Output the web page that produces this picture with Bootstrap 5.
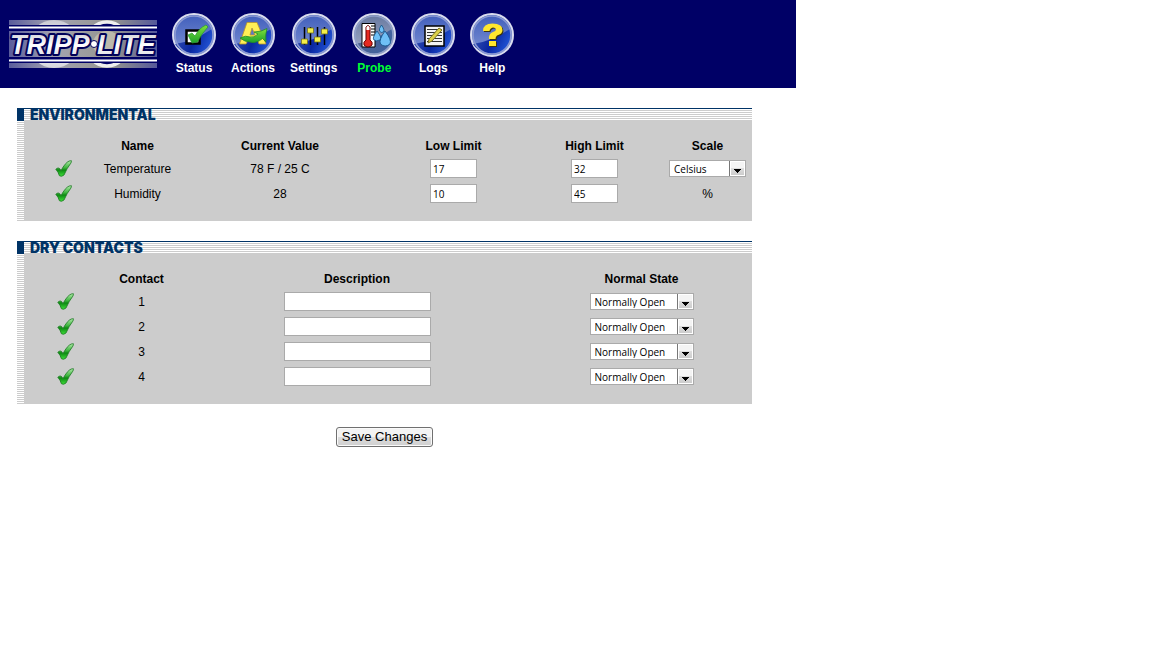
<!DOCTYPE html>
<html lang="en">
<head>
<meta charset="utf-8">
<meta name="viewport" content="width=device-width, initial-scale=1">
<title>Probe</title>
<link href="https://cdn.jsdelivr.net/npm/bootstrap@5.3.0/dist/css/bootstrap.min.css" rel="stylesheet">
<style>
  body { font-family: "Liberation Sans", Arial, sans-serif; font-size: 12px; line-height: 16px; color: #000; background: #fff; }
  .page-frame { max-width: 796px; }
  .top-bar { background: #006; height: 88px; padding: 0 9px; }
  .main-nav { padding: 13px 0 0 15px; gap: 15px; }
  .main-nav a { min-width: 44px; color: #fff; font-weight: bold; text-decoration: none; text-align: center; }
  .main-nav a.active { color: #0f3; }
  .main-nav svg { display: block; margin: 0 auto 3px; }
  .main-area { padding: 20px 44px 0 17px; }
  .panel { border-top: 1px solid #036; margin-bottom: 20px; padding-left: 7px;
    background: repeating-linear-gradient(#fff 0 1px, #ccc 1px 2px); }
  .panel-title { margin: 0 0 0 -7px; border-left: 7px solid #036; padding-left: 6px; height: 12px;
    font: 900 14px/12px Inter, "Liberation Sans", sans-serif; color: #036; }
  .panel-body { background: #ccc; padding: 14px 6px 15px 0; }
  .panel-body table { width: 100%; table-layout: fixed; text-align: center; }
  .panel-body th, .panel-body td { padding: 0; height: 25px; vertical-align: middle; }
  .panel-body th { height: 21px; }
  .panel-body svg { display: block; margin: 0 auto; }
  .c-tick { width: 78px; } .c-tick-wide { width: 82px; } .c-name { width: 71px; } .c-low { width: 133px; }
  .c-high { width: 149px; } .c-scale { width: 77px; } .c-state { width: 209px; }
  .field, .picker { font: 10px/12px "Open Sans", "Liberation Sans", sans-serif; color: #000; background-color: #fff;
    border: 1px solid #aaa; border-radius: 0; display: block; margin: 0 auto; }
  .field { width: 47px; height: 19px; padding: 0 2px; }
  .field-wide { width: 147px; }
  .picker { appearance: none; width: 104px; height: 17px; padding: 0 18px 0 4px;
    background: #fff url("data:image/svg+xml,%3Csvg xmlns='http://www.w3.org/2000/svg' width='17' height='17'%3E%3Cdefs%3E%3ClinearGradient id='g' x2='0' y2='1'%3E%3Cstop offset='.45' stop-color='%23f4f4f4'/%3E%3Cstop offset='.5' stop-color='%23ddd'/%3E%3Cstop offset='1' stop-color='%23ccc'/%3E%3C/linearGradient%3E%3C/defs%3E%3Crect x='.5' y='.5' width='16' height='16' fill='%23fff' stroke='%23777'/%3E%3Crect x='2' y='2' width='13' height='13' fill='url(%23g)'/%3E%3Cpath d='M5 9h7v1h-1v1h-1v1H9v1H8v-1H7v-1H6v-1H5z'/%3E%3C/svg%3E") right center no-repeat border-box; }
  .picker-small { width: 77px; }
  .save-btn { font-size: 13px; line-height: 16px; padding: 1px 5px; color: #000; border: 1px solid #707070; border-radius: 3px;
    background: linear-gradient(#f3f3f3 0 48%, #ddd 52%, #cfcfcf); box-shadow: inset 0 0 0 1px #fafafa; margin-top: 3px; }
</style>
<script src="https://cdn.jsdelivr.net/npm/bootstrap@5.3.0/dist/js/bootstrap.bundle.min.js"></script>
</head>
<body>
<svg width="0" height="0" class="position-absolute" aria-hidden="true">
  <defs>
    <linearGradient id="gloss" x2="0" y2="1"><stop offset="0" stop-color="#3f5dbb"/><stop offset="1" stop-color="#8296d6"/></linearGradient>
    <linearGradient id="deep" x2="1" y2=".3"><stop offset="0" stop-color="#3a55b4"/><stop offset=".6" stop-color="#0a27a0"/><stop offset="1" stop-color="#1f4fd0"/></linearGradient>
    <linearGradient id="glossGrey" x2="0" y2="1"><stop offset="0" stop-color="#66779f"/><stop offset="1" stop-color="#a9b3cc"/></linearGradient>
    <linearGradient id="deepGrey" x2="1" y2=".3"><stop offset="0" stop-color="#4e628f"/><stop offset="1" stop-color="#41639f"/></linearGradient>
    <linearGradient id="leaf" x2="0" y2="1"><stop offset="0" stop-color="#aee8a8"/><stop offset=".45" stop-color="#3db53d"/><stop offset=".6" stop-color="#0d8a12"/><stop offset="1" stop-color="#3fe03a"/></linearGradient>
    <linearGradient id="lime" x2="0" y2="1"><stop offset="0" stop-color="#7fe03a"/><stop offset="1" stop-color="#1fa32a"/></linearGradient>
    <linearGradient id="silver" x2="0" y2="1"><stop offset="0" stop-color="#c8c8d0"/><stop offset=".5" stop-color="#fff"/><stop offset="1" stop-color="#d5d5dc"/></linearGradient>
    <linearGradient id="plate"><stop offset="0" stop-color="#5a5c9c"/><stop offset=".3" stop-color="#a3a3b0"/><stop offset=".7" stop-color="#94948f"/><stop offset="1" stop-color="#55589a"/></linearGradient>
    <symbol id="disc" viewBox="0 0 44 44">
      <circle cx="22" cy="22" r="21" fill="url(#gloss)" stroke="#d9dcee" stroke-width="2"/>
      <path d="M3 31Q20 29 40 16Q43 28 35 36Q27 43 17 40Q7 38 3 31Z" fill="url(#deep)"/>
      <circle cx="22" cy="22" r="19" fill="none" stroke="#8c9ad2" stroke-width="1.5"/>
    </symbol>
    <symbol id="discGrey" viewBox="0 0 44 44">
      <circle cx="22" cy="22" r="21" fill="url(#glossGrey)" stroke="#d9dcee" stroke-width="2"/>
      <path d="M3 31Q20 29 40 16Q43 28 35 36Q27 43 17 40Q7 38 3 31Z" fill="url(#deepGrey)"/>
      <circle cx="22" cy="22" r="19" fill="none" stroke="#8f9fc8" stroke-width="1.5"/>
    </symbol>
    <symbol id="tick" viewBox="0 0 17 17">
      <path d="M.8 9.3Q4 6.2 6 10.6Q10.3 2.6 14.2 1L16.4.7Q16.8 1.4 15.8 3.2Q12 8 9 15Q6.500 17.2 4.4 15.7Q3.4 12 .8 9.3Z" fill="url(#leaf)" stroke="#1c7a22" stroke-width=".8"/>
    </symbol>
  </defs>
</svg>

<div class="page-frame">
  <header class="top-bar d-flex">
    <svg class="mt-3 flex-shrink-0" width="148" height="56" viewBox="0 -4 148 56" role="img" aria-label="Tripp-Lite">
      <rect width="148" height="48" fill="url(#plate)"/>
      <clipPath id="logoBox"><rect width="148" height="48"/></clipPath>
      <g clip-path="url(#logoBox)">
        <ellipse cx="45" cy="24" rx="25" ry="24" fill="url(#silver)"/>
        <ellipse cx="98" cy="24" rx="21" ry="22" fill="#006" stroke="#eee" stroke-width="3.500"/>
      </g>
      <rect y="5" width="148" height="38" fill="#006"/>
      <path d="M0 7.500H148M0 40.500H148" stroke="#fff" stroke-width="2"/>
      <rect y="11" width="148" height="26" fill="url(#plate)"/>
      <ellipse cx="98" cy="24" rx="14" ry="13" fill="#bbb9ac"/>
      <g font-family="'Liberation Sans',Arial,sans-serif" font-size="27" font-weight="bold" font-style="italic" fill="url(#silver)" stroke="#000058" stroke-width="4" stroke-linejoin="round" paint-order="stroke">
        <text x="1" y="34">TRIPP</text>
        <text x="88" y="34">LITE</text>
      </g>
      <circle cx="85" cy="24" r="3.500" fill="#fff" stroke="#000058"/>
    </svg>
    <nav class="main-nav d-flex align-items-start">
      <a href="#"><svg width="44" height="44"><use href="#disc"/><path d="M14.500 17.500H27.500V30.500H14.500Z" fill="#fff" stroke="#000" stroke-width="2.500"/><path d="M16 22L20 20L23 23Q27 15 34 12L36 14Q30 20 25.500 29L20 30Z" fill="url(#lime)" stroke="#249b2c" stroke-width=".7"/></svg>Status</a>
      <a href="#"><svg width="44" height="44"><use href="#disc"/><path d="M16 9.500H26L35 31H28L26.500 27H17L15 31H8.500ZM21 15L19 22H24Z" fill="#ffef55" fill-rule="evenodd" stroke="#b9962a" stroke-width=".8"/><path d="M9 25Q15 22 19 24Q23 25 27 21L23 19Q30 19 36 15.500Q34 22 35 29L31.500 25.500Q25 31 19 29Q14 29 9 25Z" fill="url(#lime)" stroke="#218a27" stroke-width=".8"/></svg>Actions</a>
      <a href="#"><svg width="44" height="44"><use href="#disc"/><path d="M12.500 14V32M18.500 14V32M25.500 14V32M32.500 14V32" stroke="#000" stroke-width="1.500"/><g fill="#f4ef48" stroke="#77741c" stroke-width=".8"><path d="M9.500 26h6v5h-6zM15.500 15h6v5h-6zM22.500 24h6v5h-6zM29.500 16h6v5h-6z"/></g></svg>Settings</a>
      <a href="#" class="active" aria-current="page"><svg width="44" height="44"><use href="#discGrey"/><path d="M10 10.500H23V34H10Z" fill="#fff" stroke="#000"/><path d="M19 13H23M19 16H23M19 19H23M19 22H23" stroke="#000"/><path d="M14 27V14Q16 11 18 14V27Q21 29 20 32Q16 36 12 32Q11 29 14 27Z" fill="#e52a20" stroke="#600"/><path d="M14.500 14Q16 12 17.500 14V17H14.500Z" fill="#fff"/><g fill="#6fc0f6" stroke="#104f84" stroke-width=".8"><path d="M29.500 12Q33 17 31.500 19Q29 20.500 27.500 18Q26.500 16 29.500 12Z"/><path d="M25 18Q30.500 25 28 27Q24 29 21.500 26.500Q20.500 24 25 18Z"/><path d="M33 18Q40 27 38 31Q33 35 28.500 31Q26.500 27 33 18Z"/></g></svg>Probe</a>
      <a href="#"><svg width="44" height="44"><use href="#disc"/><path d="M14 13H33V33H14Z" fill="#f4f4f4" stroke="#000" stroke-width="1.500"/><path d="M16 16.500H31M16 19.500H31M16 22.500H31M16 25.500H31M16 28.500H31" stroke="#333"/><path d="M17 30L18 26L28 15L31 17L21 28Z" fill="#dcd04a" stroke="#776f20"/></svg>Logs</a>
      <a href="#"><svg width="44" height="44"><use href="#disc"/><path id="ask" d="M13 18Q13 10.500 22.500 10.500Q32.500 10.500 32.500 17Q32.500 21 27 22.500Q25.500 23.500 25.500 26H19Q18.500 20.500 23 19Q26 18 26 16.500Q25.500 14.500 23 14.500Q20 15 19.500 18ZM19 28H26V33H19Z" fill="#3a3512" transform="translate(1 1)"/><path d="M13 18Q13 10.500 22.500 10.500Q32.500 10.500 32.500 17Q32.500 21 27 22.500Q25.500 23.500 25.500 26H19Q18.500 20.500 23 19Q26 18 26 16.500Q25.500 14.500 23 14.500Q20 15 19.500 18ZM19 28H26V33H19Z" fill="#ffe62e"/></svg>Help</a>
    </nav>
  </header>

  <main class="main-area">
    <form onsubmit="return false">
      <section class="panel">
        <h2 class="panel-title">ENVIRONMENTAL</h2>
        <div class="panel-body">
          <table>
            <colgroup><col class="c-tick"><col class="c-name"><col><col class="c-low"><col class="c-high"><col class="c-scale"></colgroup>
            <thead><tr><th></th><th>Name</th><th>Current Value</th><th>Low Limit</th><th>High Limit</th><th>Scale</th></tr></thead>
            <tbody>
              <tr><td><svg width="17" height="17"><use href="#tick"/></svg></td><td>Temperature</td><td>78 F / 25 C</td>
                <td><input class="field" aria-label="Temperature low limit" value="17"></td>
                <td><input class="field" aria-label="Temperature high limit" value="32"></td>
                <td><select class="picker picker-small" aria-label="Temperature scale"><option>Celsius</option></select></td></tr>
              <tr><td><svg width="17" height="17"><use href="#tick"/></svg></td><td>Humidity</td><td>28</td>
                <td><input class="field" aria-label="Humidity low limit" value="10"></td>
                <td><input class="field" aria-label="Humidity high limit" value="45"></td><td>%</td></tr>
            </tbody>
          </table>
        </div>
      </section>

      <section class="panel">
        <h2 class="panel-title">DRY CONTACTS</h2>
        <div class="panel-body">
          <table>
            <colgroup><col class="c-tick-wide"><col class="c-name"><col><col class="c-state"></colgroup>
            <thead><tr><th></th><th>Contact</th><th>Description</th><th>Normal State</th></tr></thead>
            <tbody>
              <tr><td><svg width="17" height="17"><use href="#tick"/></svg></td><td>1</td><td><input class="field field-wide" aria-label="Contact 1 description"></td><td><select class="picker" aria-label="Contact 1 normal state"><option>Normally Open</option></select></td></tr>
              <tr><td><svg width="17" height="17"><use href="#tick"/></svg></td><td>2</td><td><input class="field field-wide" aria-label="Contact 2 description"></td><td><select class="picker" aria-label="Contact 2 normal state"><option>Normally Open</option></select></td></tr>
              <tr><td><svg width="17" height="17"><use href="#tick"/></svg></td><td>3</td><td><input class="field field-wide" aria-label="Contact 3 description"></td><td><select class="picker" aria-label="Contact 3 normal state"><option>Normally Open</option></select></td></tr>
              <tr><td><svg width="17" height="17"><use href="#tick"/></svg></td><td>4</td><td><input class="field field-wide" aria-label="Contact 4 description"></td><td><select class="picker" aria-label="Contact 4 normal state"><option>Normally Open</option></select></td></tr>
            </tbody>
          </table>
        </div>
      </section>
      <div class="text-center"><button class="save-btn" type="submit">Save Changes</button></div>
    </form>
  </main>
</div>
</body>
</html>
